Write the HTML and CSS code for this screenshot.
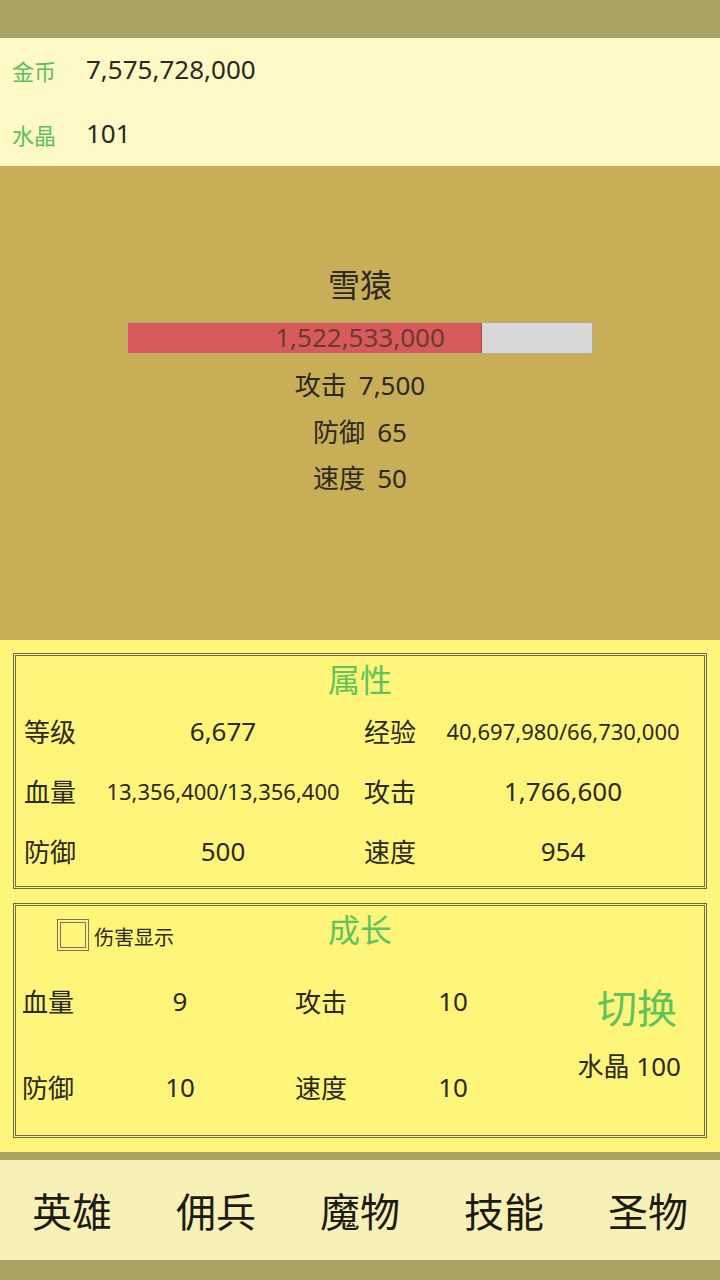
FILE: index.html
```html
<!DOCTYPE html>
<html lang="zh-CN">
<head>
    <meta charset="UTF-8">
    <meta name="viewport" content="width=device-width, initial-scale=1.0">
    <title>雪猿</title>
    <link rel="stylesheet" href="styles.css">
</head>
<body>
    <div class="status-bar"></div>

    <div class="wallet">
        <div class="wallet-row">
            <span class="wallet-label">金币</span>
            <span class="wallet-value">7,575,728,000</span>
        </div>
        <div class="wallet-row">
            <span class="wallet-label">水晶</span>
            <span class="wallet-value">101</span>
        </div>
    </div>

    <div class="monster">
        <div class="monster-name">雪猿</div>
        <div class="hp-bar">
            <div class="hp-fill" style="width: 76%"></div>
            <span class="hp-text">1,522,533,000</span>
        </div>
        <div class="monster-stat">攻击<span class="stat-num">7,500</span></div>
        <div class="monster-stat">防御<span class="stat-num">65</span></div>
        <div class="monster-stat">速度<span class="stat-num">50</span></div>
    </div>

    <div class="hero-panel">
        <div class="box attr-box">
            <div class="box-title">属性</div>
            <div class="attr-grid">
                <div class="pair"><span class="key">等级</span><span class="val">6,677</span></div>
                <div class="pair"><span class="key">经验</span><span class="val small">40,697,980/66,730,000</span></div>
                <div class="pair"><span class="key">血量</span><span class="val small">13,356,400/13,356,400</span></div>
                <div class="pair"><span class="key">攻击</span><span class="val">1,766,600</span></div>
                <div class="pair"><span class="key">防御</span><span class="val">500</span></div>
                <div class="pair"><span class="key">速度</span><span class="val">954</span></div>
            </div>
        </div>

        <div class="box grow-box">
            <div class="grow-head">
                <label class="check">
                    <span class="check-box"></span>
                    <span class="check-label">伤害显示</span>
                </label>
                <div class="box-title">成长</div>
                <div></div>
            </div>
            <div class="grow-body">
                <div class="grow-grid">
                    <div class="pair"><span class="key">血量</span><span class="val">9</span></div>
                    <div class="pair"><span class="key">攻击</span><span class="val">10</span></div>
                    <div class="pair"><span class="key">防御</span><span class="val">10</span></div>
                    <div class="pair"><span class="key">速度</span><span class="val">10</span></div>
                </div>
                <div class="switch">
                    <div class="switch-title">切换</div>
                    <div class="switch-cost">水晶 100</div>
                </div>
            </div>
        </div>
    </div>

    <div class="nav-strip"></div>
    <nav class="tabs">
        <span class="tab">英雄</span>
        <span class="tab">佣兵</span>
        <span class="tab">魔物</span>
        <span class="tab">技能</span>
        <span class="tab">圣物</span>
    </nav>
    <div class="nav-bottom"></div>
</body>
</html>
```

FILE: styles.css
```css
/* General */
body {
    margin: 0;
    width: 720px;
    height: 1280px;
    overflow: hidden;
    background-color: #a8a363;
    font-family: "Noto Sans", "Noto Sans CJK SC", sans-serif;
    color: #2b2a20;
}

.status-bar {
    height: 38px;
}

/* Wallet */
.wallet {
    background-color: #fefac8;
    height: 128px;
}

.wallet-row {
    display: flex;
    align-items: center;
    height: 64px;
}

.wallet-label {
    width: 74px;
    padding-left: 12px;
    font-size: 22px;
    color: #5cbf5a;
}

.wallet-value {
    font-size: 26px;
    margin-top: -2px;
}

/* Monster */
.monster {
    background-color: #c9ae58;
    height: 474px;
    box-sizing: border-box;
    padding-top: 99px;
    display: flex;
    flex-direction: column;
    align-items: center;
}

.monster-name {
    font-size: 32px;
    line-height: 40px;
    margin-bottom: 17px;
}

.hp-bar {
    position: relative;
    width: 466px;
    height: 32px;
    box-sizing: border-box;
    background-color: #d8d8d8;
    border: 1px solid #b5ab8a;
    border-radius: 2px;
    margin-bottom: 8px;
}

.hp-fill {
    height: 100%;
    background-color: #d95a5a;
    border-right: 1px solid #b34a4a;
}

.hp-text {
    position: absolute;
    left: 0;
    right: 0;
    top: -1px;
    line-height: 30px;
    text-align: center;
    font-size: 26px;
    color: #6a3a36;
}

.monster-stat {
    font-size: 26px;
    line-height: 46.5px;
}

.stat-num {
    margin-left: 12px;
}

/* Hero panel */
.hero-panel {
    background-color: #fff57a;
    height: 512px;
    box-sizing: border-box;
    padding: 13px 13px 0;
    display: flex;
    flex-direction: column;
    gap: 14px;
}

.box {
    border: 3px double #6e6a4e;
    box-sizing: border-box;
}

.attr-box {
    height: 236px;
}

.grow-box {
    height: 235px;
}

.box-title {
    text-align: center;
    font-size: 32px;
    color: #5cc45a;
}

.attr-box .box-title {
    line-height: 45px;
    padding-top: 1px;
    height: 44px;
}

.attr-grid {
    display: grid;
    grid-template-columns: 316px 316px;
    column-gap: 24px;
    padding-left: 8px;
}

.attr-grid .pair {
    display: grid;
    grid-template-columns: 82px 234px;
    align-items: center;
    height: 60px;
}

.key {
    font-size: 26px;
}

.val {
    font-size: 26px;
    text-align: center;
}

.val.small {
    font-size: 22px;
}

/* Growth box */
.grow-head {
    display: grid;
    grid-template-columns: 1fr auto 1fr;
    align-items: center;
    height: 52px;
}

.grow-head .box-title {
    line-height: 46px;
    margin-top: -4px;
}

.check {
    display: flex;
    align-items: center;
    padding-left: 41px;
    margin-top: 6px;
}

.check-box {
    width: 32px;
    height: 32px;
    box-sizing: border-box;
    border: 4px double #7a7560;
}

.check-label {
    font-size: 20px;
    margin-left: 5px;
    margin-top: 2px;
}

.grow-body {
    display: flex;
    justify-content: space-between;
}

.grow-grid {
    display: grid;
    grid-template-columns: 264px 264px;
    column-gap: 9px;
    padding-left: 6px;
}

.grow-grid .pair {
    display: grid;
    grid-template-columns: 52px 212px;
    align-items: center;
    height: 86px;
}

.switch {
    display: flex;
    flex-direction: column;
    align-items: flex-end;
    padding-right: 23px;
}

.switch-title {
    font-size: 40px;
    line-height: 50px;
    margin-top: 25px;
    margin-right: 4px;
    color: #5cc45a;
}

.switch-cost {
    font-size: 26px;
    line-height: 34px;
    margin-top: 16px;
}

/* Bottom tabs */
.nav-strip {
    height: 8px;
}

.tabs {
    display: grid;
    grid-template-columns: repeat(5, 1fr);
    height: 100px;
    align-items: center;
    background-color: #f8f1b7;
}

.tab {
    text-align: center;
    font-size: 40px;
    color: #1c1c14;
}

.nav-bottom {
    height: 20px;
}
```
